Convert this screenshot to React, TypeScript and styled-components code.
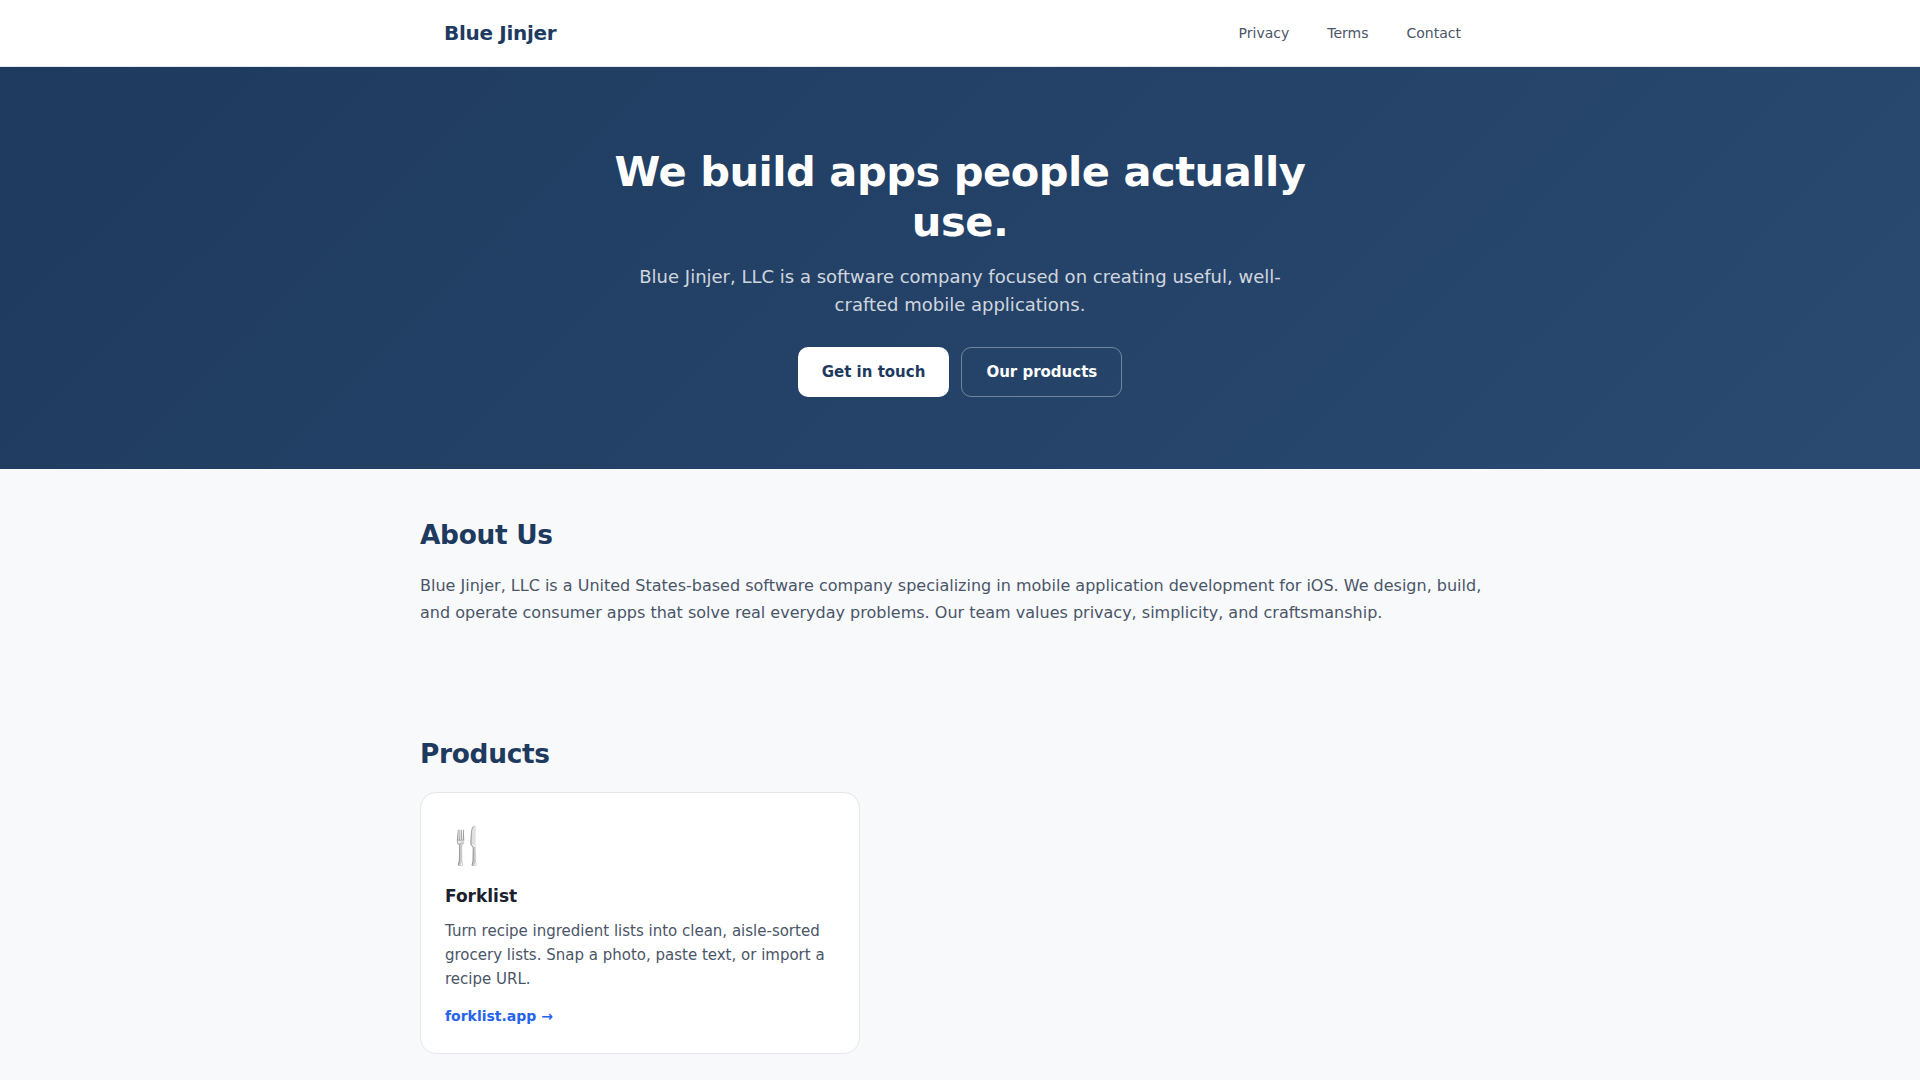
import styled, { createGlobalStyle } from "styled-components";

const GlobalStyle = createGlobalStyle`
  * {
    box-sizing: border-box;
  }
  body {
    margin: 0;
    background: #f8f9fb;
    color: #4a5568;
    font-family: "DejaVu Sans", Verdana, sans-serif;
    line-height: 1.6;
  }
  a {
    text-decoration: none;
  }
`;

const App = () => {
  return (
    <>
      <GlobalStyle />
      <Header>
        <Nav>
          <Logo href="#">Blue Jinjer</Logo>
          <NavLinks>
            <NavLink href="#">Privacy</NavLink>
            <NavLink href="#">Terms</NavLink>
            <NavLink href="#">Contact</NavLink>
          </NavLinks>
        </Nav>
      </Header>
      <Hero>
        <HeroTitle>We build apps people actually use.</HeroTitle>
        <HeroText>
          Blue Jinjer, LLC is a software company focused on creating useful, well-crafted mobile applications.
        </HeroText>
        <HeroButtons>
          <Button href="#">Get in touch</Button>
          <Button href="#" $outline>Our products</Button>
        </HeroButtons>
      </Hero>
      <Main>
        <AboutSection>
          <SectionTitle>About Us</SectionTitle>
          <AboutText>
            Blue Jinjer, LLC is a United States-based software company specializing in mobile application development for iOS. We design, build, and operate consumer apps that solve real everyday problems. Our team values privacy, simplicity, and craftsmanship.
          </AboutText>
        </AboutSection>
        <ProductsSection>
          <SectionTitle>Products</SectionTitle>
          <ProductGrid>
            <Card>
              <CardIcon>🍴</CardIcon>
              <CardTitle>Forklist</CardTitle>
              <CardText>
                Turn recipe ingredient lists into clean, aisle-sorted grocery lists. Snap a photo, paste text, or import a recipe URL.
              </CardText>
              <CardLink href="#">forklist.app →</CardLink>
            </Card>
          </ProductGrid>
        </ProductsSection>
      </Main>
    </>
  );
};

export default App;

const Header = styled.header`
  background: #fff;
  border-bottom: 1px solid #e5e7eb;
`;

const Nav = styled.nav`
  max-width: 1080px;
  height: 66px;
  margin: 0 auto;
  padding: 0 24px;
  display: flex;
  align-items: center;
  justify-content: space-between;
`;

const Logo = styled.a`
  font-size: 20px;
  font-weight: 700;
  letter-spacing: -0.3px;
  color: #1e3a5f;
`;

const NavLinks = styled.div`
  display: flex;
  gap: 8px;
`;

const NavLink = styled.a`
  padding: 6px 15px;
  font-size: 14px;
  color: #4a5568;
`;

const Hero = styled.section`
  padding: 80px 24px 72px;
  background: linear-gradient(135deg, #1e3a5f 0%, #2a4a6f 100%);
  color: #fff;
  text-align: center;
`;

const HeroTitle = styled.h1`
  max-width: 720px;
  margin: 0 auto 16px;
  font-size: 41.6px;
  font-weight: 700;
  letter-spacing: -0.5px;
  line-height: 1.2;
`;

const HeroText = styled.p`
  max-width: 680px;
  margin: 0 auto 28px;
  font-size: 18px;
  line-height: 1.55;
  color: rgba(255, 255, 255, 0.8);
`;

const HeroButtons = styled.div`
  display: flex;
  justify-content: center;
  gap: 12px;
`;

const Button = styled.a<{ $outline?: boolean }>`
  display: inline-flex;
  align-items: center;
  height: 50px;
  padding: 0 24px;
  border-radius: 10px;
  font-size: 15px;
  font-weight: 700;
  background: ${(props) => (props.$outline ? "transparent" : "#fff")};
  color: ${(props) => (props.$outline ? "#fff" : "#1e3a5f")};
  border: ${(props) => (props.$outline ? "1px solid rgba(255, 255, 255, 0.35)" : "none")};
`;

const Main = styled.main`
  max-width: 1080px;
  margin: 0 auto;
`;

const AboutSection = styled.section`
  padding-top: 49px;
`;

const ProductsSection = styled.section`
  padding-top: 111px;
`;

const SectionTitle = styled.h2`
  margin: 0 0 20px;
  font-size: 26.4px;
  font-weight: 700;
  letter-spacing: -0.3px;
  line-height: 1.3;
  color: #1e3a5f;
`;

const AboutText = styled.p`
  margin: 0;
  font-size: 16px;
  line-height: 1.7;
`;

const ProductGrid = styled.div`
  display: grid;
  grid-template-columns: 440px;
`;

const Card = styled.article`
  padding: 24px 24px 25px;
  background: #fff;
  border: 1px solid #e5e7eb;
  border-radius: 16px;
`;

const CardIcon = styled.div`
  margin-bottom: 9px;
  font-size: 36px;
`;

const CardTitle = styled.h3`
  margin: 0 0 9px;
  font-size: 17px;
  font-weight: 700;
  color: #1a202c;
`;

const CardText = styled.p`
  margin: 0 0 14px;
  font-size: 15px;
  line-height: 1.6;
`;

const CardLink = styled.a`
  display: block;
  font-size: 14px;
  font-weight: 700;
  color: #2563eb;
`;
